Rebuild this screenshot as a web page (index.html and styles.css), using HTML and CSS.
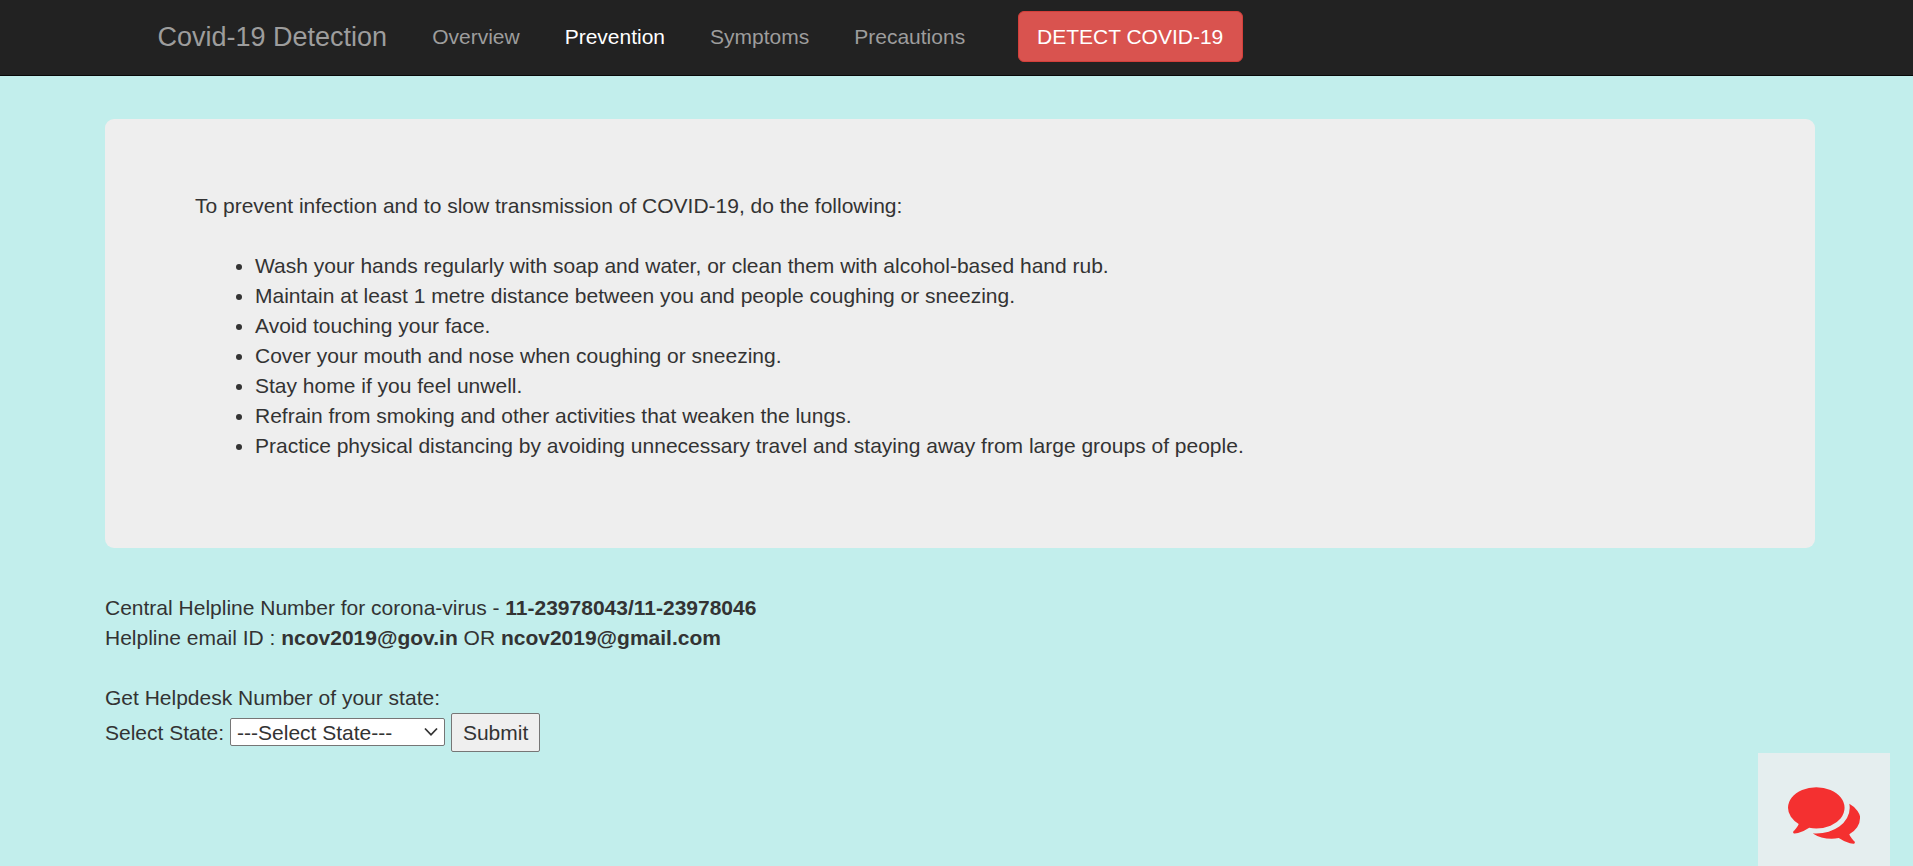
FILE: index.html
```html
<!DOCTYPE html>
<html lang="en">
<head>
<meta charset="utf-8">
<title>Covid-19 Detection</title>
<link rel="stylesheet" href="styles.css">
</head>
<body>
<nav class="navbar">
  <a class="brand" href="#">Covid-19 Detection</a>
  <ul class="nav">
    <li><a class="nav-link" href="#">Overview</a></li>
    <li><a class="nav-link active" href="#">Prevention</a></li>
    <li><a class="nav-link" href="#">Symptoms</a></li>
    <li><a class="nav-link" href="#">Precautions</a></li>
  </ul>
  <a class="btn-detect" href="#">DETECT COVID-19</a>
</nav>
<main class="content">
  <section class="jumbotron">
    <p class="intro">To prevent infection and to slow transmission of COVID-19, do the following:</p>
    <ul class="tips">
      <li>Wash your hands regularly with soap and water, or clean them with alcohol-based hand rub.</li>
      <li>Maintain at least 1 metre distance between you and people coughing or sneezing.</li>
      <li>Avoid touching your face.</li>
      <li>Cover your mouth and nose when coughing or sneezing.</li>
      <li>Stay home if you feel unwell.</li>
      <li>Refrain from smoking and other activities that weaken the lungs.</li>
      <li>Practice physical distancing by avoiding unnecessary travel and staying away from large groups of people.</li>
    </ul>
  </section>
  <section class="helpline">
    <div>Central Helpline Number for corona-virus - <b>11-23978043/11-23978046</b></div>
    <div>Helpline email ID : <b>ncov2019@gov.in</b> OR <b>ncov2019@gmail.com</b></div>
  </section>
  <form class="helpdesk">
    <div>Get Helpdesk Number of your state:</div>
    <div class="state-row">
      <label for="state">Select State:</label>
      <span class="select-wrap">
        <select id="state" class="state-select"><option>---Select State---</option></select>
        <svg class="chevron" viewBox="0 0 14 10" aria-hidden="true"><path d="M1 1.500 7 7.800l6-6.300"/></svg>
      </span>
      <button class="submit" type="button">Submit</button>
    </div>
  </form>
</main>
<a class="chat" href="#" aria-label="Chat">
  <svg class="chat-icon" viewBox="0 0 1792 1792" aria-hidden="true"><path d="M1408 768q0 139-94 257t-256.500 186.500-353.500 68.500q-86 0-176-16-124 88-278 128-36 9-86 16h-3q-11 0-20.500-8t-11.500-21q-1-3-1-6.500t.5-6.500 2-6l2.500-5 3.500-5.500 4-5 4.500-5 4-4.500q5-6 23-25t26-29.500 22.500-29 25-38.500 20.500-44q-124-72-195-177t-71-224q0-139 94-257t256.500-186.500 353.500-68.500 353.500 68.500 256.500 186.500 94 257zm384 256q0 120-71 224.500t-195 176.500q10 24 20.500 44t25 38.500 22.500 29 26 29.500 23 25q1 1 4 4.500t4.500 5 4 5 3.500 5.500l2.500 5 2 6 .5 6.500-1 6.500q-3 14-13 22t-22 7q-50-7-86-16-154-40-278-128-90 16-176 16-271 0-472-132 58 4 88 4 161 0 309-45t264-129q125-92 192-212t67-250q0-52-10-104 129 71 204 178t75 229z"/></svg>
</a>
</body>
</html>
```

FILE: styles.css
```css
* { box-sizing: border-box; }
html, body { height: 100%; }
body {
  margin: 0;
  background: #c2eeec;
  color: #333;
  font-family: "Liberation Sans", Arial, sans-serif;
  font-size: 21px;
  line-height: 30px;
  overflow: hidden;
}
a { text-decoration: none; }
ul { margin: 0; }

.navbar {
  display: flex;
  align-items: flex-start;
  height: 76px;
  padding-left: 157.500px;
  background: #222;
  border-bottom: 1px solid #080808;
}
.brand {
  padding: 22px 22.5px 0 0;
  color: #9d9d9d;
  font-size: 27px;
}
.nav {
  display: flex;
  padding: 0;
  list-style: none;
}
.nav-link {
  display: block;
  padding: 22px 22.5px;
  color: #9d9d9d;
}
.nav-link.active { color: #fff; }
.btn-detect {
  width: 225px;
  height: 51px;
  margin: 11px 0 0 30px;
  padding: 10px 0;
  border: 1px solid #d43f3a;
  border-radius: 6px;
  background: #d9534f;
  color: #fff;
  text-align: center;
}

.content { padding: 43px 98px 0 105px; }
.jumbotron {
  padding: 72px 90px 87px;
  border-radius: 9px;
  background: #eee;
}
.intro { margin: 0 0 30px; }
.tips { padding-left: 60px; }

.helpline { margin-top: 45px; }
.helpdesk { margin-top: 30px; }
.state-row {
  display: flex;
  align-items: center;
  gap: 6px;
  height: 39px;
}
.select-wrap {
  position: relative;
  display: flex;
  margin-bottom: 2px;
}
.state-select {
  width: 215px;
  height: 28px;
  padding: 1px 0 0 6px;
  appearance: none;
  border: 1px solid #767676;
  border-radius: 2px;
  background: #fff;
  color: #333;
  font: inherit;
  line-height: 26px;
}
.chevron {
  position: absolute;
  right: 7px;
  top: 9px;
  width: 14px;
  height: 10px;
  fill: none;
  stroke: #333;
  stroke-width: 1.8;
}
.submit {
  width: 89px;
  height: 39px;
  padding: 0;
  border: 1px solid #767676;
  border-radius: 2px;
  background: #efefef;
  color: #333;
  font: inherit;
}

.chat {
  position: fixed;
  right: 23px;
  bottom: 0;
  display: flex;
  justify-content: center;
  width: 132px;
  height: 113px;
  padding-top: 24px;
  background: #e5eeef;
}
.chat-icon {
  width: 72px;
  height: 72px;
  fill: #f43030;
}
```
